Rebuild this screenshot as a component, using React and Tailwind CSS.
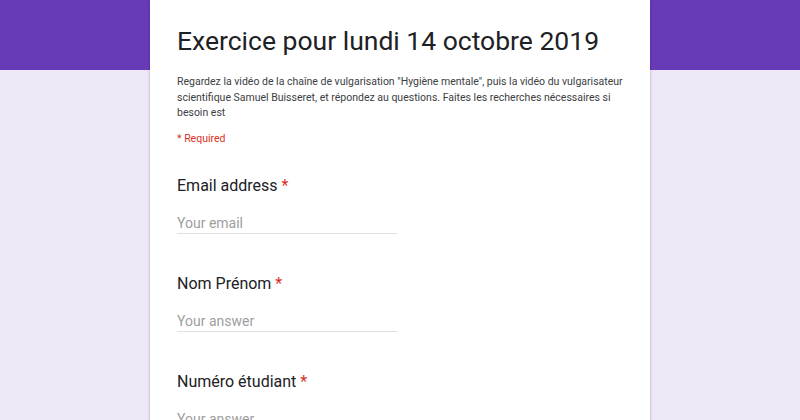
const questions = [
  { label: 'Email address', placeholder: 'Your email' },
  { label: 'Nom Prénom', placeholder: 'Your answer' },
  { label: 'Numéro étudiant', placeholder: 'Your answer' },
];

export default function App() {
  return (
    <div className="relative h-[420px] overflow-hidden bg-[#ede7f6] font-['Roboto',sans-serif]">
      {/* purple header band behind the card */}
      <div className="absolute inset-x-0 top-0 h-[70px] bg-[#673ab7]" />

      <div className="relative mx-auto w-[500px] bg-white px-[27px] pt-[24px] pb-10 shadow-[0_1px_3px_rgba(0,0,0,0.25)]">
        <h1 className="text-[26.5px] leading-[33px] text-[#202124]">Exercice pour lundi 14 octobre 2019</h1>

        <p className="mt-[17px] text-[10.5px] leading-[15.5px] text-[#3c4043]">
          Regardez la vidéo de la chaîne de vulgarisation "Hygiène mentale", puis la vidéo du vulgarisateur
          scientifique Samuel Buisseret, et répondez au questions. Faites les recherches nécessaires si
          besoin est
        </p>

        <div className="mt-[10px] text-[10.5px] leading-[15px] text-[#d93025]">* Required</div>

        <div className="mt-[28px] flex flex-col gap-[38px]">
          {questions.map((q) => (
            <div key={q.label}>
              <div className="text-[16px] leading-[24px] text-[#202124]">
                {q.label} <span className="text-[#d93025]">*</span>
              </div>
              <div className="mt-[15px] w-[220px] border-b border-[#e0e0e0] text-[14px] leading-[20px] text-[#9e9e9e]">
                {q.placeholder}
              </div>
            </div>
          ))}
        </div>
      </div>
    </div>
  );
}
